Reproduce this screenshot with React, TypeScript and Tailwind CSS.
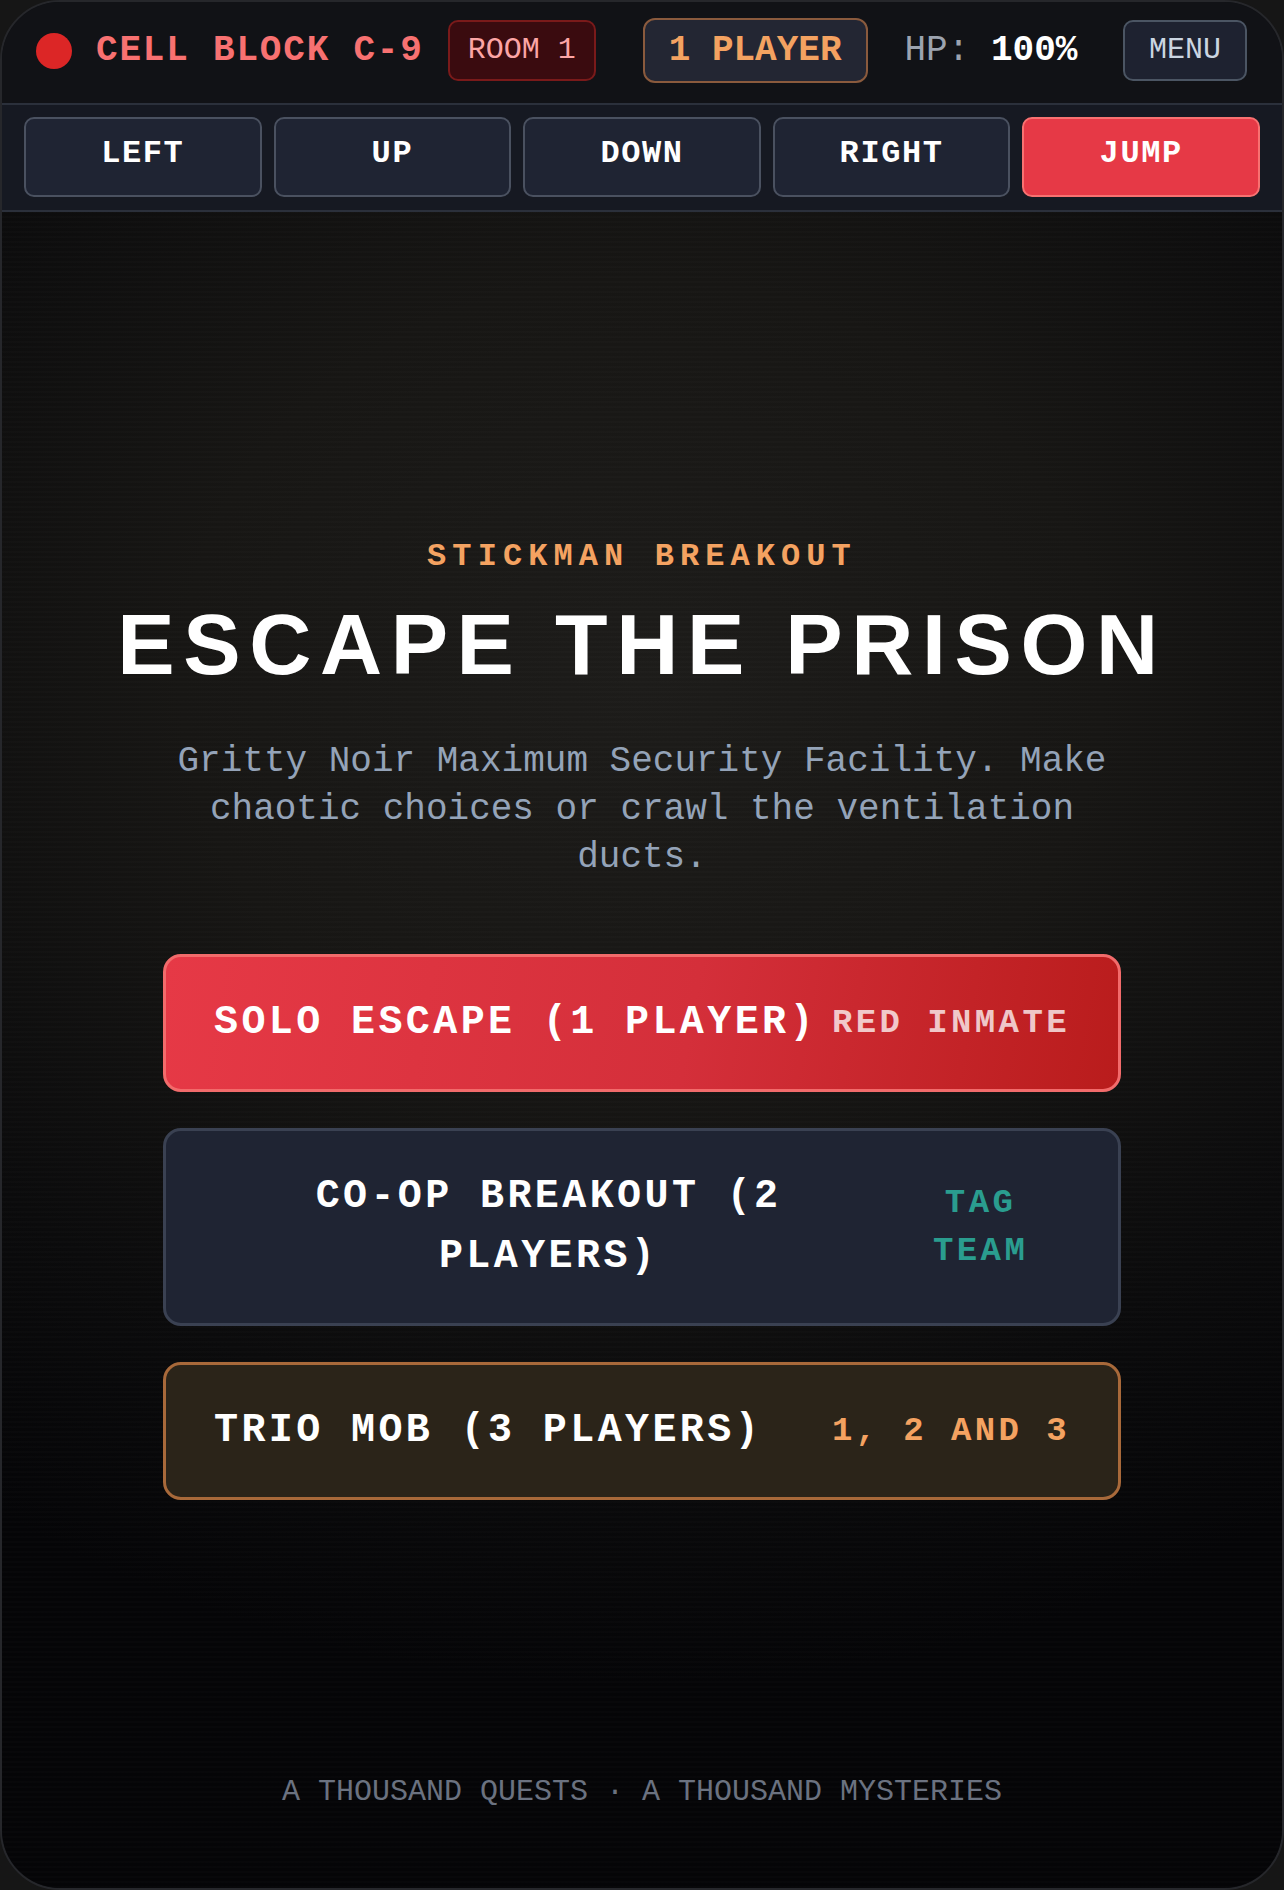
import React from "react";

const mono = "font-['Liberation_Mono','DejaVu_Sans_Mono',monospace]";

const controls = ["LEFT", "UP", "DOWN", "RIGHT", "JUMP"];

type Mode = {
  title: string;
  tag: string;
  box: string;
  tagColor: string;
};

const modes: Mode[] = [
  {
    title: "SOLO ESCAPE (1 PLAYER)",
    tag: "RED INMATE",
    box: "border-[#f26b6b] bg-[linear-gradient(100deg,#e63946_0%,#d42f3a_55%,#b91c1c_100%)]",
    tagColor: "text-white/75",
  },
  {
    title: "CO-OP BREAKOUT (2 PLAYERS)",
    tag: "TAG TEAM",
    box: "border-[#3a4152] bg-[#1f2433]",
    tagColor: "text-[#2a9d8f]",
  },
  {
    title: "TRIO MOB (3 PLAYERS)",
    tag: "1, 2 AND 3",
    box: "border-[#a8693a] bg-[#2b2419]",
    tagColor: "text-[#f4a261]",
  },
];

function TopBar() {
  return (
    <header className="flex h-[103px] shrink-0 items-center border-b-2 border-[#2b303b] bg-[#111216] pb-1 pl-[34px] pr-[35px]">
      <span className="h-9 w-9 shrink-0 rounded-full bg-[#dc2626]" />
      <span className="ml-6 text-[36px] font-bold tracking-[0.05em] text-[#f87171]">CELL BLOCK C-9</span>
      <span className="ml-[24px] flex h-[61px] items-center rounded-[10px] border-2 border-[#7a1a1a] bg-[#3a0b0f] px-[18px] text-[30px] text-[#fca5a5]">
        ROOM 1
      </span>
      <span className="ml-[47px] flex h-[65px] items-center rounded-[12px] border-2 border-[#8a5a3d] bg-[#232633] px-6 text-[36px] font-bold text-[#f4a261]">
        1 PLAYER
      </span>
      <span className="ml-[37px] text-[36px] text-[#9ca3af]">
        HP: <span className="font-bold text-white">100%</span>
      </span>
      <button className="ml-auto flex h-[61px] items-center rounded-[10px] border-2 border-[#4b5563] bg-[#1e2230] px-6 text-[30px] text-[#cbd5e1]">
        MENU
      </button>
    </header>
  );
}

function ControlPad() {
  return (
    <div className="grid shrink-0 grid-cols-5 gap-3 border-b-2 border-[#2b303b] bg-[#161922] px-[22px] pb-[13px] pt-3">
      {controls.map((c) => (
        <button
          key={c}
          className={
            c === "JUMP"
              ? "flex h-20 items-center justify-center rounded-[10px] border-2 border-[#f87171] bg-[#e63946] pb-[7px] text-[32px] font-bold tracking-[0.05em] text-white"
              : "flex h-20 items-center justify-center rounded-[10px] border-2 border-[#4a5160] bg-[#1f2433] pb-[7px] text-[32px] font-bold tracking-[0.05em] text-white"
          }
        >
          {c}
        </button>
      ))}
    </div>
  );
}

export default function App() {
  return (
    <div className={`min-h-[1890px] bg-[#161616] ${mono}`}>
      <div className="flex h-[1890px] flex-col overflow-hidden rounded-[60px] border-2 border-[#26272b] bg-[#111216]">
        <TopBar />
        <ControlPad />

        <main className="flex flex-1 flex-col items-center bg-[repeating-linear-gradient(0deg,rgba(255,255,255,0.012)_0px,rgba(255,255,255,0.012)_2px,transparent_2px,transparent_5px),radial-gradient(ellipse_90%_60%_at_50%_28%,#1d1c1a_0%,#171614_40%,#0b0b0c_75%,#050507_100%)] pt-[325px]">
          <p className="text-[32px] font-bold leading-[40px] tracking-[0.19em] text-[#f4a261]">STICKMAN BREAKOUT</p>
          <h1 className="mt-[24px] font-['Liberation_Sans',Arial,sans-serif] text-[86px] font-bold leading-none tracking-[0.1em] text-white">
            ESCAPE THE PRISON
          </h1>
          <p className="mt-[51px] max-w-[960px] text-center text-[36px] leading-[48px] text-[#94a3b8]">
            Gritty Noir Maximum Security Facility. Make chaotic choices or crawl the ventilation ducts.
          </p>

          <div className="mt-[72px] flex w-[958px] flex-col gap-[36px]">
            {modes.map((m) => (
              <button
                key={m.title}
                className={`flex items-center justify-between gap-2 rounded-[18px] border-[3px] px-12 py-[36px] ${m.box}`}
              >
                <span className="text-center text-[40px] font-bold leading-[60px] tracking-[0.085em] text-white">
                  {m.title}
                </span>
                <span className={`text-center text-[34px] font-bold leading-[48px] tracking-[0.1em] ${m.tagColor}`}>
                  {m.tag}
                </span>
              </button>
            ))}
          </div>

          <footer className="mt-auto pb-[76px] text-[30px] leading-[40px] text-[#6b7280]">
            A THOUSAND QUESTS · A THOUSAND MYSTERIES
          </footer>
        </main>
      </div>
    </div>
  );
}
